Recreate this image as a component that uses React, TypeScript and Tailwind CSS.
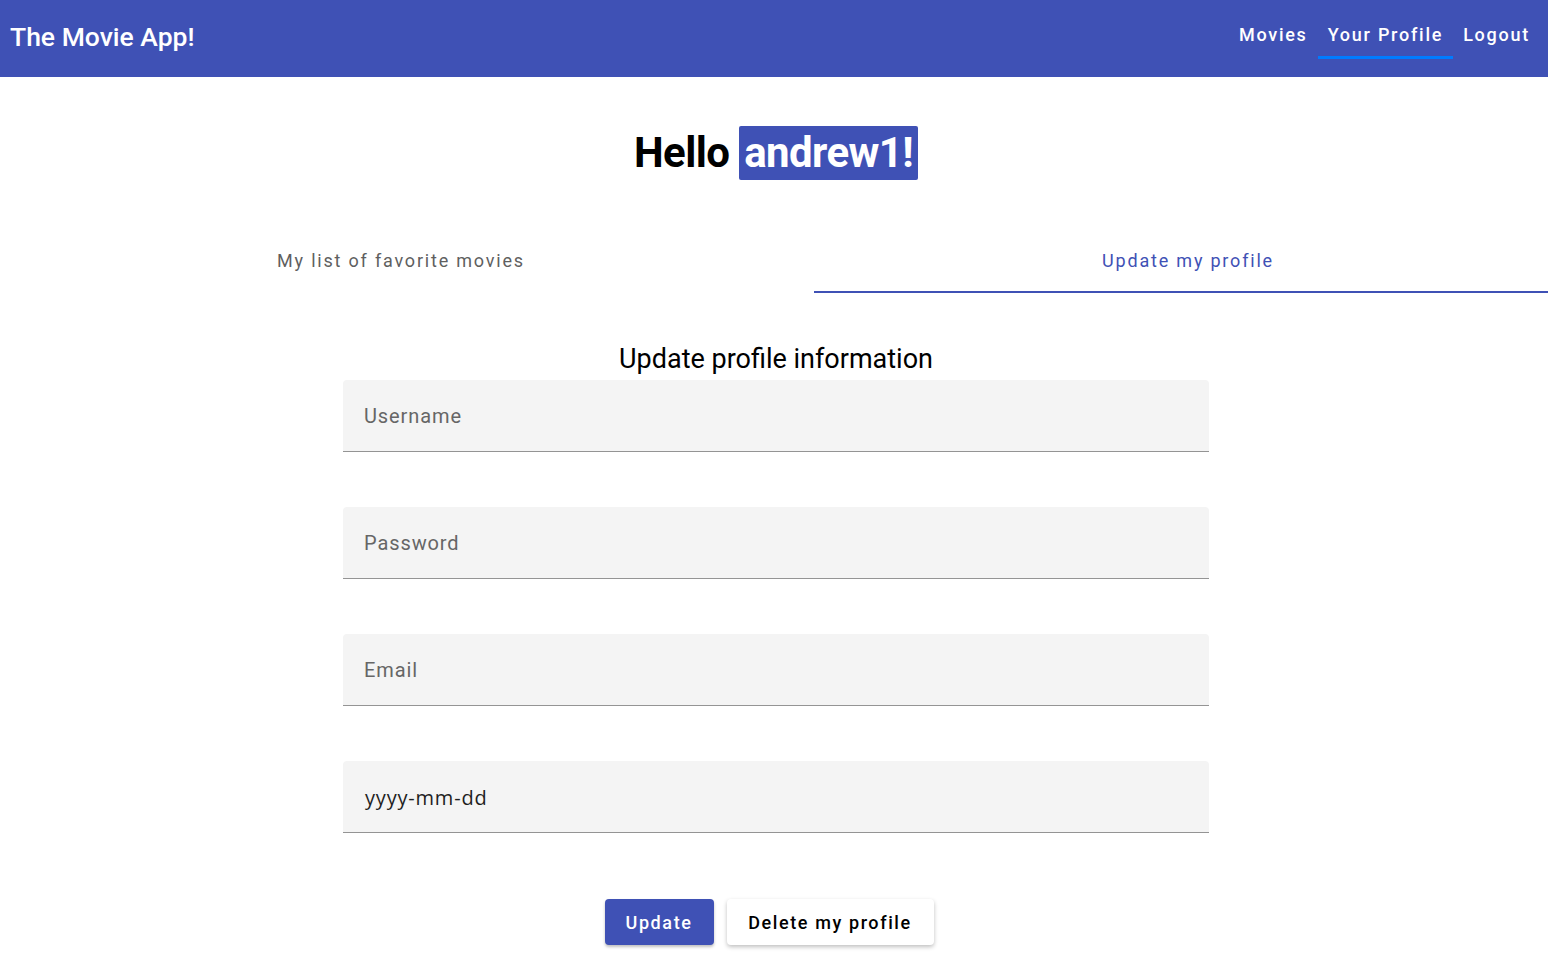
import React from 'react'

const NavLink: React.FC<{ label: string; active?: boolean }> = ({ label, active }) => (
  <a
    href="#"
    className={
      active
        ? 'relative px-[10px] pb-[4px] text-[18px] font-medium tracking-[1.75px] text-white after:absolute after:left-0 after:right-0 after:top-[35px] after:h-[3px] after:bg-[#007bff]'
        : 'relative px-[10px] pb-[4px] text-[18px] font-medium tracking-[1.75px] text-white'
    }
  >
    {label}
  </a>
)

const Field: React.FC<{ label: string; date?: boolean }> = ({ label, date }) => (
  <div className="h-[72px] rounded-t-[4px] border-b border-[#949494] bg-[#f4f4f4] px-[21px] flex items-center">
    {date ? (
      <span className="pt-[3px] pl-[1px] text-[20px] text-[#1f1f1f] font-['Open_Sans',sans-serif] tracking-[0.8px]">
        yyyy-mm-dd
      </span>
    ) : (
      <span className="text-[20px] text-[#666] tracking-[0.9px]">{label}</span>
    )}
  </div>
)

export default function App() {
  return (
    <div className="min-h-screen bg-white font-['Roboto',sans-serif]">
      <header className="h-[77px] bg-[#3f51b5] flex items-center justify-between pl-[10px] pr-[8px] pb-[4px]">
        <h1 className="text-[26.5px] font-medium text-white">The Movie App!</h1>
        <nav className="flex items-center gap-0">
          <NavLink label="Movies" />
          <NavLink label="Your Profile" active />
          <NavLink label="Logout" />
        </nav>
      </header>

      <div className="flex justify-center pt-[49px] pl-[4px]">
        <h2 className="text-[42px] font-bold text-black tracking-[-0.6px] leading-[54px]">
          Hello{' '}
          <span className="inline-block rounded-[2px] bg-[#3f51b5] px-[5px] leading-[54px] text-white">andrew1!</span>
        </h2>
      </div>

      <div className="mt-[51px] flex h-[62px]">
        <button className="w-[814px] pb-[4px] text-[18px] tracking-[1.8px] text-[#5f5f5f] pr-[12px]">
          My list of favorite movies
        </button>
        <button className="flex-1 border-b-2 border-[#3f51b5] pb-[2px] text-[18px] tracking-[1.8px] text-[#3f51b5] pl-[14px]">
          Update my profile
        </button>
      </div>

      <div className="mx-auto w-[866px] pt-[51px] translate-x-[2px]">
        <h3 className="text-center text-[27px] leading-[30px] text-black">Update profile information</h3>
        <div className="mt-[6px] flex flex-col gap-[55px]">
          <Field label="Username" />
          <Field label="Password" />
          <Field label="Email" />
          <Field label="" date />
        </div>
        <div className="mt-[66px] flex justify-center gap-[13px] pr-[14px]">
          <button className="h-[46px] w-[109px] rounded-[4px] bg-[#3f51b5] text-[18px] font-medium tracking-[1.6px] text-white shadow-[0_2px_3px_rgba(0,0,0,0.25)]">
            Update
          </button>
          <button className="h-[46px] w-[207px] rounded-[4px] bg-white text-[18px] font-medium tracking-[1.6px] text-black shadow-[0_2px_4px_rgba(0,0,0,0.25)]">
            Delete my profile
          </button>
        </div>
      </div>
    </div>
  )
}
